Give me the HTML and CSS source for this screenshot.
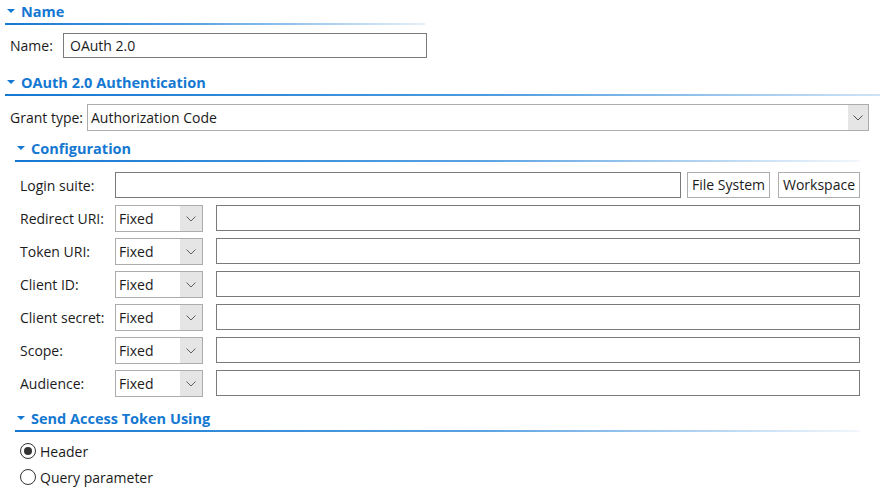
FILE: index.html
```html
<!DOCTYPE html>
<html>
<head>
<meta charset="utf-8">
<link rel="stylesheet" href="styles.css">
</head>
<body>
<div class="page">
  <div class="sec-head"><span class="tri"></span>Name</div>
  <div class="sec-line line-short"></div>
  <div class="name-row">
    <span class="lbl">Name:</span>
    <div class="field name-field">OAuth 2.0</div>
  </div>

  <div class="sec-head gap-big"><span class="tri"></span>OAuth 2.0 Authentication</div>
  <div class="sec-line line-full"></div>
  <div class="grant-row">
    <span class="lbl">Grant type:</span>
    <div class="combo grant-combo"><span class="combo-text">Authorization Code</span><span class="combo-btn"><svg width="10" height="6" viewBox="0 0 10 6"><path d="M0.5 0.5 L5 5 L9.5 0.5" fill="none" stroke="#505050" stroke-width="1"/></svg></span></div>
  </div>

  <div class="sub">
    <div class="sec-head sub-head"><span class="tri"></span>Configuration</div>
    <div class="sec-line line-sub"></div>
    <div class="rows">
      <div class="row">
        <span class="rlbl">Login suite:</span>
        <div class="field grow login-field"></div>
        <div class="btn btn-fs">File System</div>
        <div class="btn btn-ws">Workspace</div>
      </div>
      <div class="row">
        <span class="rlbl">Redirect URI:</span>
        <div class="combo small"><span class="combo-text">Fixed</span><span class="combo-btn"><svg width="10" height="6" viewBox="0 0 10 6"><path d="M0.5 0.5 L5 5 L9.5 0.5" fill="none" stroke="#606060" stroke-width="1"/></svg></span></div>
        <div class="field grow"></div>
      </div>
      <div class="row">
        <span class="rlbl">Token URI:</span>
        <div class="combo small"><span class="combo-text">Fixed</span><span class="combo-btn"><svg width="10" height="6" viewBox="0 0 10 6"><path d="M0.5 0.5 L5 5 L9.5 0.5" fill="none" stroke="#606060" stroke-width="1"/></svg></span></div>
        <div class="field grow"></div>
      </div>
      <div class="row">
        <span class="rlbl">Client ID:</span>
        <div class="combo small"><span class="combo-text">Fixed</span><span class="combo-btn"><svg width="10" height="6" viewBox="0 0 10 6"><path d="M0.5 0.5 L5 5 L9.5 0.5" fill="none" stroke="#606060" stroke-width="1"/></svg></span></div>
        <div class="field grow"></div>
      </div>
      <div class="row">
        <span class="rlbl">Client secret:</span>
        <div class="combo small"><span class="combo-text">Fixed</span><span class="combo-btn"><svg width="10" height="6" viewBox="0 0 10 6"><path d="M0.5 0.5 L5 5 L9.5 0.5" fill="none" stroke="#606060" stroke-width="1"/></svg></span></div>
        <div class="field grow"></div>
      </div>
      <div class="row">
        <span class="rlbl">Scope:</span>
        <div class="combo small"><span class="combo-text">Fixed</span><span class="combo-btn"><svg width="10" height="6" viewBox="0 0 10 6"><path d="M0.5 0.5 L5 5 L9.5 0.5" fill="none" stroke="#606060" stroke-width="1"/></svg></span></div>
        <div class="field grow"></div>
      </div>
      <div class="row">
        <span class="rlbl">Audience:</span>
        <div class="combo small"><span class="combo-text">Fixed</span><span class="combo-btn"><svg width="10" height="6" viewBox="0 0 10 6"><path d="M0.5 0.5 L5 5 L9.5 0.5" fill="none" stroke="#606060" stroke-width="1"/></svg></span></div>
        <div class="field grow"></div>
      </div>
    </div>

    <div class="sec-head sub-head send-head"><span class="tri"></span>Send Access Token Using</div>
    <div class="sec-line line-sub"></div>
    <div class="radios">
      <div class="radio-row"><span class="radio checked"></span>Header</div>
      <div class="radio-row"><span class="radio"></span>Query parameter</div>
    </div>
  </div>
</div>
</body>
</html>
```

FILE: styles.css
```css
html, body {
  margin: 0;
  padding: 0;
  background: #ffffff;
}
body {
  font-family: "Open Sans", "Noto Sans", sans-serif;
  font-size: 14px;
  color: #1b1b1b;
  width: 880px;
  height: 496px;
  overflow: hidden;
}
.page {
  padding-left: 5px;
}
.sec-head {
  height: 22px;
  padding-bottom: 1px;
  display: flex;
  align-items: center;
  font-weight: 700;
  font-size: 14.5px;
  color: #1478d2;
}
.tri {
  width: 0;
  height: 0;
  border-left: 4px solid transparent;
  border-right: 4px solid transparent;
  border-top: 4px solid #1478d2;
  margin-left: 2px;
  margin-right: 6px;
}
.sec-line {
  height: 2px;
}
.line-short {
  width: 420px;
  background: linear-gradient(to right, #1478d2 0%, #5aa2e2 45%, #e6f0fa 100%);
}
.line-full {
  width: 875px;
  background: linear-gradient(to right, #1478d2 0%, #4d9be0 55%, #cfe3f6 100%);
}
.line-sub {
  width: 845px;
  background: linear-gradient(to right, #1478d2 0%, #5aa2e2 55%, #f2f7fc 100%);
}
.gap-big {
  margin-top: 13px;
}
.lbl {
  padding-left: 5px;
}
.name-row {
  margin-top: 8px;
  display: flex;
  align-items: center;
  height: 25px;
}
.name-row .lbl {
  width: 53px;
}
.field {
  box-sizing: border-box;
  border: 1px solid #7a7a7a;
  background: #fff;
  height: 26px;
}
.name-field {
  width: 364px;
  height: 25px;
  padding-left: 6px;
  line-height: 23px;
}
.grant-row {
  margin-top: 8px;
  display: flex;
  align-items: center;
  height: 27px;
  padding-right: 11px;
}
.grant-row .lbl {
  width: 77px;
}
.combo {
  box-sizing: border-box;
  border: 1px solid #acacac;
  height: 27px;
  display: flex;
  background: #e5e5e5;
}
.combo-text {
  flex: 1;
  background: #fff;
  line-height: 25px;
  padding-left: 3px;
}
.combo-btn {
  display: flex;
  align-items: center;
  justify-content: center;
}
.grant-combo {
  flex: 1;
}
.grant-combo .combo-btn {
  width: 20px;
}
.sub {
  padding-left: 10px;
}
.sub-head {
  margin-top: 6px;
}
.rows {
  margin-top: 10px;
  display: flex;
  flex-direction: column;
  gap: 6px;
  padding-right: 20px;
}
.row {
  display: flex;
  align-items: flex-start;
  height: 27px;
}
.rlbl {
  width: 100px;
  padding-left: 5px;
  box-sizing: border-box;
  line-height: 27px;
  flex: none;
}
.grow {
  flex: 1;
}
.small {
  width: 88px;
  margin-right: 13px;
  flex: none;
}
.small .combo-text {
  padding-left: 3px;
}
.small .combo-btn {
  width: 22px;
}
.btn {
  box-sizing: border-box;
  border: 1px solid #adadad;
  background: #fff;
  height: 26px;
  line-height: 24px;
  text-align: center;
  flex: none;
}
.btn-fs {
  width: 83px;
  margin-left: 6px;
}
.btn-ws {
  width: 82px;
  margin-left: 8px;
}
.send-head {
  margin-top: 10px;
}
.radios {
  margin-top: 6px;
  padding-left: 5px;
}
.radio-row {
  height: 26px;
  display: flex;
  align-items: center;
}
.radio {
  box-sizing: border-box;
  width: 16px;
  height: 16px;
  border: 1px solid #333;
  border-radius: 50%;
  margin-right: 4px;
  display: flex;
  align-items: center;
  justify-content: center;
  background: #fff;
}
.radio.checked::after {
  content: "";
  width: 8px;
  height: 8px;
  border-radius: 50%;
  background: #333;
}
```
